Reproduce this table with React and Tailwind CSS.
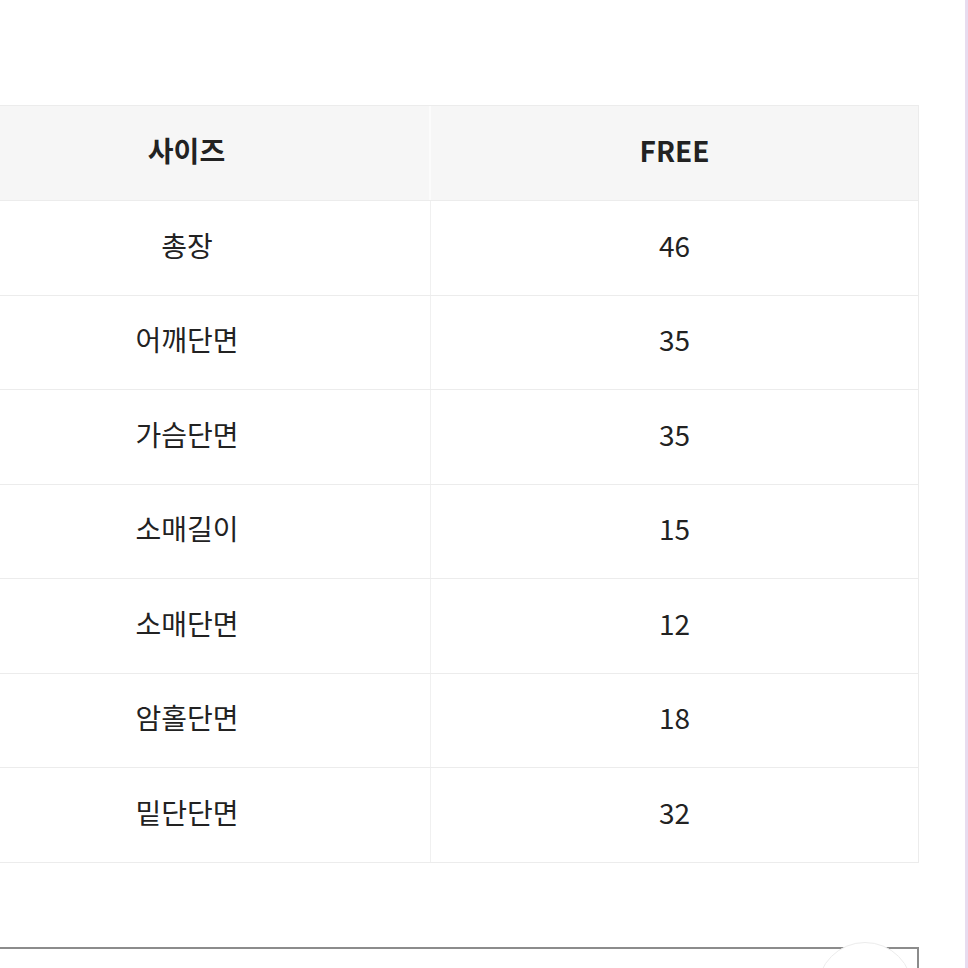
const rows = [
  ["총장", "46"],
  ["어깨단면", "35"],
  ["가슴단면", "35"],
  ["소매길이", "15"],
  ["소매단면", "12"],
  ["암홀단면", "18"],
  ["밑단단면", "32"],
];

const font = { fontFamily: '"Noto Sans CJK KR", "Noto Sans", sans-serif' };

export default function App() {
  return (
    <div className="w-[968px] h-[968px] bg-white overflow-hidden flex" style={font}>
      <div className="relative w-[965px] h-full">
        <div className="pt-[105px]">
          <div className="ml-[-56px] w-[975px] border-t border-r border-[#ececec]">
            <div className="grid grid-cols-2 h-[95px] bg-[#f6f6f6] border-b border-[#ececec] text-[28px] font-bold text-[#222]">
              <div className="flex items-center justify-center pb-[6px] border-r-2 border-[#fbfbfb]">사이즈</div>
              <div className="flex items-center justify-center pb-[6px]">FREE</div>
            </div>
            {rows.map(([label, value]) => (
              <div key={label} className="grid grid-cols-2 h-[94.5px] border-b border-[#ececec] text-[28px] text-[#222]">
                <div className="flex items-center justify-center pb-[6px] border-r border-[#f0f0f0]">{label}</div>
                <div className="flex items-center justify-center pb-[6px]">{value}</div>
              </div>
            ))}
          </div>
          <div className="mt-[84px] ml-[-10px] w-[929px] h-[40px] border-t-2 border-r-2 border-[#8c8c8c]" />
        </div>
        <div className="absolute left-[817px] top-[942px] w-[96px] h-[96px] rounded-full bg-white border border-[#ececec]" />
      </div>
      <div className="w-[3px] h-full bg-[#e8dcef]" />
    </div>
  );
}
